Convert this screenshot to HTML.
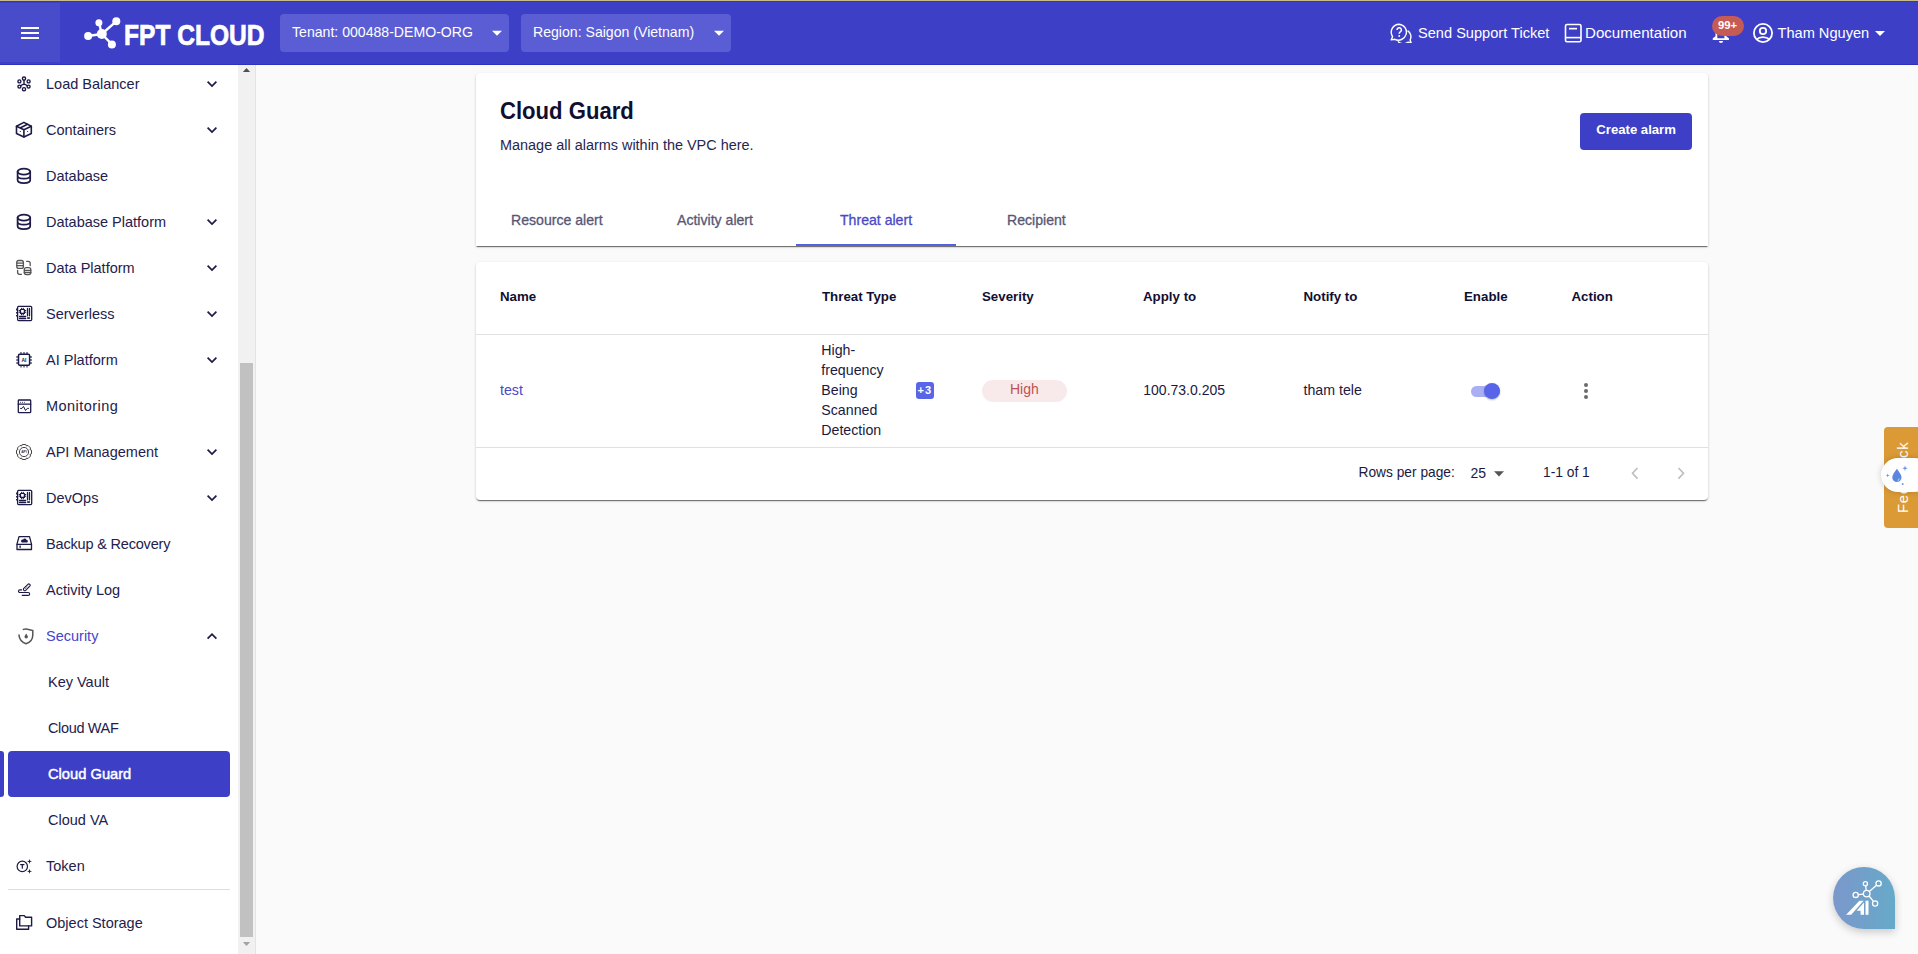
<!DOCTYPE html>
<html><head><meta charset="utf-8">
<style>
*{box-sizing:border-box;margin:0;padding:0}
html,body{width:1918px;height:954px;overflow:hidden;background:#fafafa;font-family:"Liberation Sans",sans-serif}
.abs{position:absolute}
.t{position:absolute;white-space:nowrap;line-height:1}
#topline{left:0;top:0;width:1918px;height:1px;background:#c6bc8c}
#hdr{left:0;top:1px;width:1918px;height:64px;background:#3d40c7;border-top:1px solid #3236c6;border-bottom:1px solid #2d31c0}
#hamb{left:0;top:3px;width:60px;height:59px;background:#484ccb}
.sel{position:absolute;top:14px;height:38px;background:#5a5dd3;border-radius:4px}
.wt{color:#fff}
#side{left:0;top:65px;width:238px;height:889px;background:#fff}
#track{left:238px;top:65px;width:17px;height:889px;background:#f1f1f1}
#trackb{left:255px;top:65px;width:1px;height:889px;background:#e3e3e3}
#thumb{left:240px;top:363px;width:13px;height:574px;background:#c1c1c1}
.si{position:absolute;left:46px;font-size:14.5px;color:#23214c;white-space:nowrap;line-height:1}
.ic{position:absolute;left:16px;width:16px;height:16px}
.chev{position:absolute;left:206px;width:11px;height:7px}
.card{position:absolute;background:#fff;border-radius:4px;box-shadow:0 2px 1px -1px rgba(0,0,0,.4),0 1px 1px 0 rgba(0,0,0,.2),0 1px 3px 0 rgba(0,0,0,.16)}
.th{top:290px;font-size:13.3px;font-weight:700;color:#110f33}
.td{font-size:14.2px;color:#1b1942;white-space:nowrap}
</style></head>
<body>
<div id="topline" class="abs"></div>
<div id="hdr" class="abs"></div>
<div id="hamb" class="abs"></div>
<!-- hamburger -->
<div class="abs" style="left:21px;top:27px;width:18px;height:2px;background:#fff"></div>
<div class="abs" style="left:21px;top:32px;width:18px;height:2px;background:#fff"></div>
<div class="abs" style="left:21px;top:37px;width:18px;height:2px;background:#fff"></div>


<!-- logo -->
<svg class="abs" style="left:80px;top:14px" width="44" height="38" viewBox="80 14 44 38">
 <g stroke="#fff" stroke-width="2.4" fill="none">
  <line x1="101.8" y1="34" x2="88" y2="36"/>
  <line x1="101.8" y1="34" x2="99" y2="22.8"/>
  <line x1="101.8" y1="34" x2="116.2" y2="21.3"/>
  <line x1="101.8" y1="34" x2="111.9" y2="44.4"/>
 </g>
 <g fill="#fff">
  <circle cx="101.8" cy="34" r="5"/>
  <circle cx="88.1" cy="36" r="4"/>
  <circle cx="98.9" cy="22.8" r="3.5"/>
  <circle cx="116.3" cy="21.3" r="4"/>
  <circle cx="111.9" cy="44.4" r="4"/>
 </g>
</svg>
<div class="t wt" id="logo" style="left:123.6px;top:20.8px;font-size:29.2px;font-weight:700;transform-origin:0 0;transform:scaleX(0.842);letter-spacing:0;-webkit-text-stroke:0.7px #fff">FPT CLOUD</div>

<div class="sel" style="left:280px;width:229px"></div>
<div class="t wt" style="left:292px;top:25px;font-size:14.1px">Tenant: 000488-DEMO-ORG</div>
<svg class="abs" style="left:491px;top:28px" width="12" height="9" viewBox="0 0 12 9"><path d="M1 2.7h10L6 7.7z" fill="#fff"/></svg>
<div class="sel" style="left:521px;width:210px"></div>
<div class="t wt" style="left:533px;top:25px;font-size:14.1px">Region: Saigon (Vietnam)</div>
<svg class="abs" style="left:712.5px;top:28px" width="12" height="9" viewBox="0 0 12 9"><path d="M1 2.7h10L6 7.7z" fill="#fff"/></svg>

<!-- support -->
<svg class="abs" style="left:1390px;top:23px" width="23" height="20" viewBox="0 0 23 20">
 <g fill="none" stroke="#fff" stroke-width="1.4" stroke-linejoin="round">
  <path d="M9.2 1.2a8 8 0 0 0-6.6 12.4l-1.4 3.3 3.6-.6A8 8 0 1 0 9.2 1.2z"/>
  <path d="M17.6 7.6a7.2 7.2 0 0 1 2.5 9.4l1 2.7-3.2-.5a7.3 7.3 0 0 1-10-.8"/>
 </g>
 <path d="M7 7a2.2 2.2 0 1 1 3.3 1.9c-.8.5-1.1.9-1.1 1.8" fill="none" stroke="#fff" stroke-width="1.5"/>
 <circle cx="9.2" cy="13" r="0.9" fill="#fff"/>
</svg>
<div class="t wt" style="left:1418px;top:25.5px;font-size:14.6px">Send Support Ticket</div>
<svg class="abs" style="left:1564px;top:23px" width="19" height="20" viewBox="0 0 19 20">
 <g fill="none" stroke="#fff" stroke-width="1.6">
  <rect x="1.5" y="1.5" width="15.5" height="17.3" rx="1.5"/>
  <line x1="1.5" y1="14.6" x2="17" y2="14.6"/>
 </g>
 <rect x="5" y="4.8" width="8" height="1.7" fill="#fff"/>
</svg>
<div class="t wt" style="left:1585px;top:24.8px;font-size:15.1px">Documentation</div>
<!-- bell -->
<svg class="abs" style="left:1710px;top:18px" width="22" height="26" viewBox="0 0 22 26">
 <path fill-rule="evenodd" d="M5.5 10V18.3L2.8 20.2V22H18.9V20.2L16.2 18.3V10ZM7.3 10V20.2H14.4V10Z" fill="#fff"/>
 <path d="M8.9 23h4.2a2.1 2.1 0 0 1-4.2 0z" fill="#fff"/>
</svg>
<div class="abs" style="left:1712px;top:16px;width:32px;height:20px;border-radius:10px;background:#c65a55"></div>
<div class="t wt" style="left:1718px;top:20.2px;font-size:11.3px;font-weight:700">99+</div>
<!-- user -->
<svg class="abs" style="left:1752px;top:22px" width="22" height="22" viewBox="0 0 22 22">
 <g fill="none" stroke="#fff" stroke-width="1.8">
  <circle cx="11" cy="11" r="9.1"/>
  <circle cx="11" cy="9" r="3.2"/>
  <path d="M4.6 17.4c1.6-1.5 3.8-2.3 6.4-2.3s4.8.8 6.4 2.3"/>
 </g>
</svg>
<div class="t wt" style="left:1777.5px;top:25.5px;font-size:14.6px">Tham Nguyen</div>
<svg class="abs" style="left:1874px;top:29px" width="12" height="8" viewBox="0 0 12 8"><path d="M1 2h10l-5 5z" fill="#fff"/></svg>

<div id="side" class="abs"></div>
<div id="track" class="abs"></div>
<div id="trackb" class="abs"></div>
<div id="thumb" class="abs"></div>

<svg class="abs" style="left:12px;top:72px" width="24" height="24" viewBox="0 0 24 24"><g fill="none" stroke="#1c1a47" stroke-width="1.4" stroke-linecap="round" stroke-linejoin="round"><circle cx="12" cy="6.6" r="1.6"/><circle cx="7.4" cy="9.4" r="1.5"/><circle cx="16.6" cy="9.4" r="1.5"/><circle cx="7.4" cy="14.6" r="1.5"/><circle cx="16.6" cy="14.6" r="1.5"/><circle cx="12" cy="17.2" r="1.6"/><path d="M12 8.2v4M8.8 13.8Q12 10.8 15.2 13.8"/></g></svg>
<div class="si" style="top:76.7px">Load Balancer</div>
<svg class="abs" style="left:205px;top:77px" width="14" height="14" viewBox="0 0 14 14"><path d="M2.6 4.6L7 9l4.4-4.4" fill="none" stroke="#1c1a47" stroke-width="1.7"/></svg>
<svg class="abs" style="left:12px;top:118px" width="24" height="24" viewBox="0 0 24 24"><g fill="none" stroke="#1c1a47" stroke-width="1.6" stroke-linecap="round" stroke-linejoin="round"><path d="M11.9 4.4L19.3 8.3v7.2l-7.4 3.4-7.4-3.4V8.3z"/><path d="M4.5 8.3l7.4 3.4 7.4-3.4M11.9 11.7v7.2M15.5 6.3L8 10"/></g><circle cx="8.3" cy="13.5" r=".6" fill="#1c1a47"/><circle cx="15.6" cy="13.5" r=".6" fill="#1c1a47"/></svg>
<div class="si" style="top:122.7px">Containers</div>
<svg class="abs" style="left:205px;top:123px" width="14" height="14" viewBox="0 0 14 14"><path d="M2.6 4.6L7 9l4.4-4.4" fill="none" stroke="#1c1a47" stroke-width="1.7"/></svg>
<svg class="abs" style="left:12px;top:164px" width="24" height="24" viewBox="0 0 24 24"><g fill="none" stroke="#1c1a47" stroke-linecap="round" stroke-linejoin="round" stroke-width="1.75"><ellipse cx="11.9" cy="7.6" rx="6.3" ry="3"/><path d="M5.6 7.6v8.4c0 1.7 2.8 3 6.3 3s6.3-1.3 6.3-3V7.6M5.6 11.7c0 1.7 2.8 2.9 6.3 2.9s6.3-1.2 6.3-2.9"/></g></svg>
<div class="si" style="top:168.7px">Database</div>
<svg class="abs" style="left:12px;top:210px" width="24" height="24" viewBox="0 0 24 24"><g fill="none" stroke="#1c1a47" stroke-linecap="round" stroke-linejoin="round" stroke-width="1.75"><ellipse cx="11.9" cy="7.6" rx="6.3" ry="3"/><path d="M5.6 7.6v8.4c0 1.7 2.8 3 6.3 3s6.3-1.3 6.3-3V7.6M5.6 11.7c0 1.7 2.8 2.9 6.3 2.9s6.3-1.2 6.3-2.9"/></g></svg>
<div class="si" style="top:214.7px">Database Platform</div>
<svg class="abs" style="left:205px;top:215px" width="14" height="14" viewBox="0 0 14 14"><path d="M2.6 4.6L7 9l4.4-4.4" fill="none" stroke="#1c1a47" stroke-width="1.7"/></svg>
<svg class="abs" style="left:12px;top:256px" width="24" height="24" viewBox="0 0 24 24"><g fill="none" stroke="#555" stroke-width="1.3" stroke-linecap="round"><rect x="4.8" y="4.5" width="6.6" height="7.9" rx="2"/><path d="M4.8 7.2h6.6M4.8 9.7h6.6"/><rect x="12.3" y="11.6" width="6.5" height="7" rx="2"/><path d="M12.3 14.3h6.5M12.3 16.5h6.5"/><path d="M14.6 5.3h1.6a2 2 0 0 1 2 2v2.2M5.6 14.3v2a2 2 0 0 0 2 2h1.9"/></g></svg>
<div class="si" style="top:260.7px">Data Platform</div>
<svg class="abs" style="left:205px;top:261px" width="14" height="14" viewBox="0 0 14 14"><path d="M2.6 4.6L7 9l4.4-4.4" fill="none" stroke="#1c1a47" stroke-width="1.7"/></svg>
<svg class="abs" style="left:12px;top:302px" width="24" height="24" viewBox="0 0 24 24"><g fill="none" stroke="#1c1a47" stroke-linecap="round" stroke-linejoin="round" stroke-width="1.3"><rect x="5.6" y="4.3" width="14.1" height="14.3" rx="1"/><path d="M15.5 6.4v7.4M17.5 6.4v7.4M7.5 14.5h6.2M7.5 16.5h6.2"/><rect x="8.5" y="7.5" width="3.9" height="3.9" stroke-width="1.2"/><path d="M9.6 6.2v1.3M11.3 6.2v1.3M9.6 11.4v1.3M11.3 11.4v1.3M7.2 8.6h1.3M7.2 10.3h1.3M12.4 8.6h1.3M12.4 10.3h1.3" stroke-width="1.1"/></g><rect x="15.2" y="15.2" width="2.7" height="1.7" fill="#1c1a47"/><path d="M4.1 6.5h1.5v2H4.1zM4.1 10h1.5v1.6H4.1zM4.1 13h1.5v1.6H4.1z" fill="#1c1a47"/></svg>
<div class="si" style="top:306.7px">Serverless</div>
<svg class="abs" style="left:205px;top:307px" width="14" height="14" viewBox="0 0 14 14"><path d="M2.6 4.6L7 9l4.4-4.4" fill="none" stroke="#1c1a47" stroke-width="1.7"/></svg>
<svg class="abs" style="left:12px;top:348px" width="24" height="24" viewBox="0 0 24 24"><g fill="none" stroke="#1c1a47" stroke-linecap="butt" stroke-linejoin="round" stroke-width="1.5"><rect x="6.5" y="6.3" width="11.1" height="11" rx="1.2"/><path d="M9 4v2.3M12 4v2.3M15 4v2.3M9 17.3v2.3M12 17.3v2.3M15 17.3v2.3M4.2 9h2.3M4.2 12h2.3M4.2 15h2.3M17.6 9h2.3M17.6 12h2.3M17.6 15h2.3" stroke-opacity=".8" stroke-width="1.3"/></g><text x="12" y="13.9" font-size="5" font-weight="700" text-anchor="middle" fill="#1c1a47" font-family="Liberation Sans">AI</text></svg>
<div class="si" style="top:352.7px">AI Platform</div>
<svg class="abs" style="left:205px;top:353px" width="14" height="14" viewBox="0 0 14 14"><path d="M2.6 4.6L7 9l4.4-4.4" fill="none" stroke="#1c1a47" stroke-width="1.7"/></svg>
<svg class="abs" style="left:12px;top:394px" width="24" height="24" viewBox="0 0 24 24"><g fill="none" stroke="#1c1a47" stroke-linecap="round" stroke-linejoin="round" stroke-width="1.3"><rect x="6.3" y="6" width="12.4" height="12.7" rx=".8"/><path d="M6.3 10.2h12.4"/><path d="M8.5 14.4h1.5l1.5-2 2 4.1 1.8-2.1h1.2" stroke-width="1"/></g><circle cx="8.6" cy="8.3" r=".5" fill="#1c1a47"/><circle cx="10.5" cy="8.3" r=".5" fill="#1c1a47"/><circle cx="12.4" cy="8.3" r=".5" fill="#1c1a47"/></svg>
<div class="si" style="top:398.7px;letter-spacing:0.45px">Monitoring</div>
<svg class="abs" style="left:12px;top:440px" width="24" height="24" viewBox="0 0 24 24"><g fill="none" stroke="#444" stroke-width="1" stroke-linejoin="round"><path d="M9.51 5.99 L10.17 4.52 L13.83 4.52 L14.49 5.99 L15.99 5.42 L18.58 8.01 L18.01 9.51 L19.48 10.17 L19.48 13.83 L18.01 14.49 L18.58 15.99 L15.99 18.58 L14.49 18.01 L13.83 19.48 L10.17 19.48 L9.51 18.01 L8.01 18.58 L5.42 15.99 L5.99 14.49 L4.52 13.83 L4.52 10.17 L5.99 9.51 L5.42 8.01 L8.01 5.42Z"/><circle cx="12" cy="12" r="4.6"/></g><text x="12" y="13.2" font-size="3.4" font-weight="700" text-anchor="middle" fill="#333" font-family="Liberation Sans">API</text></svg>
<div class="si" style="top:444.7px">API Management</div>
<svg class="abs" style="left:205px;top:445px" width="14" height="14" viewBox="0 0 14 14"><path d="M2.6 4.6L7 9l4.4-4.4" fill="none" stroke="#1c1a47" stroke-width="1.7"/></svg>
<svg class="abs" style="left:12px;top:486px" width="24" height="24" viewBox="0 0 24 24"><g fill="none" stroke="#1c1a47" stroke-linecap="round" stroke-linejoin="round" stroke-width="1.3"><rect x="5.6" y="4.3" width="14.1" height="14.3" rx="1"/><path d="M15.5 6.4v7.4M17.5 6.4v7.4M7.5 14.5h6.2M7.5 16.5h6.2"/><rect x="8.5" y="7.5" width="3.9" height="3.9" stroke-width="1.2"/><path d="M9.6 6.2v1.3M11.3 6.2v1.3M9.6 11.4v1.3M11.3 11.4v1.3M7.2 8.6h1.3M7.2 10.3h1.3M12.4 8.6h1.3M12.4 10.3h1.3" stroke-width="1.1"/></g><rect x="15.2" y="15.2" width="2.7" height="1.7" fill="#1c1a47"/><path d="M4.1 6.5h1.5v2H4.1zM4.1 10h1.5v1.6H4.1zM4.1 13h1.5v1.6H4.1z" fill="#1c1a47"/></svg>
<div class="si" style="top:490.7px">DevOps</div>
<svg class="abs" style="left:205px;top:491px" width="14" height="14" viewBox="0 0 14 14"><path d="M2.6 4.6L7 9l4.4-4.4" fill="none" stroke="#1c1a47" stroke-width="1.7"/></svg>
<svg class="abs" style="left:12px;top:532px" width="24" height="24" viewBox="0 0 24 24"><g fill="none" stroke="#1c1a47" stroke-linecap="round" stroke-linejoin="round" stroke-width="1.3"><path d="M7 4.6h10.5l2 7.6v5.3H5v-5.3z"/><path d="M5 12.3h14.5M8.1 14v1.5"/></g><path d="M10 10.5h4.6a1.3 1.3 0 0 0 0-2.6 1.8 1.8 0 0 0-3.4-.3 1.5 1.5 0 0 0-1.2 2.9z" fill="#1c1a47"/></svg>
<div class="si" style="top:536.7px;letter-spacing:-0.18px">Backup &amp; Recovery</div>
<svg class="abs" style="left:12px;top:578px" width="24" height="24" viewBox="0 0 24 24"><g fill="none" stroke="#1c1a47" stroke-linecap="round" stroke-linejoin="round" stroke-width="1.1"><path d="M9.6 11.9H7.8a1.3 1.3 0 0 0 0 2.6h8.4a1.45 1.45 0 0 1 0 2.9h-5.9"/><rect x="-1.35" y="-4.2" width="2.7" height="8.4" rx="1.3" transform="translate(14.8 9.3) rotate(45)"/></g><g fill="#1c1a47"><circle cx="13.6" cy="10.5" r=".45"/><circle cx="14.8" cy="9.3" r=".45"/><circle cx="16" cy="8.1" r=".45"/></g></svg>
<div class="si" style="top:582.7px">Activity Log</div>
<svg class="abs" style="left:12px;top:624px" width="24" height="24" viewBox="0 0 24 24"><g fill="none" stroke="#555" stroke-width="1.5" stroke-linecap="round"><path d="M11.4 5.4c1.5-.5 2.8-.5 4.2-.1l5.2 1.3v4.3c0 4.2-2.8 7.4-6.8 8.8-3.9-1.4-6.7-4.5-7-8.6"/></g><path d="M14.2 9.6l1.6 2.7a1.7 1.7 0 1 1-3.2 0z" fill="#555"/></svg>
<div class="si" style="top:628.7px;color:#4744cc">Security</div>
<svg class="abs" style="left:205px;top:629px" width="14" height="14" viewBox="0 0 14 14"><path d="M2.6 9.6L7 5.2l4.4 4.4" fill="none" stroke="#1c1a47" stroke-width="1.7"/></svg>
<div class="si" style="left:48px;top:674.7px">Key Vault</div>
<div class="si" style="left:48px;top:720.7px;letter-spacing:-0.35px">Cloud WAF</div>
<div class="si" style="left:48px;top:812.7px">Cloud VA</div>
<div class="abs" style="left:8px;top:751px;width:222px;height:46px;border-radius:4px;background:#3d40c7"></div>
<div class="abs" style="left:0;top:751px;width:4px;height:46px;border-radius:0 3px 3px 0;background:#3d40c7"></div>
<div class="si" style="left:48px;top:766.7px;color:#fff;font-size:14.7px;-webkit-text-stroke:0.45px #fff">Cloud Guard</div>
<svg class="abs" style="left:12px;top:854px" width="24" height="24" viewBox="0 0 24 24"><g fill="none" stroke="#1c1a47" stroke-linecap="round" stroke-linejoin="round" stroke-width="1.2"><circle cx="10.3" cy="12.4" r="5.2"/><path d="M8.6 10.6h3.4M10.3 10.6v3.6"/></g><path d="M17.5 4.9l.6 1.9 1.9.6-1.9.6-.6 1.9-.6-1.9-1.9-.6 1.9-.6zM17.5 14.8l.6 1.9 1.9.6-1.9.6-.6 1.9-.6-1.9-1.9-.6 1.9-.6z" fill="#1c1a47"/></svg>
<div class="si" style="top:858.7px">Token</div>
<div class="abs" style="left:8px;top:889px;width:222px;height:1px;background:#dcdce2"></div>
<svg class="abs" style="left:12px;top:910px" width="24" height="24" viewBox="0 0 24 24"><g fill="none" stroke="#1c1a47" stroke-linecap="round" stroke-linejoin="round" stroke-width="1.4"><path d="M7.7 5.6h4.6l1.3 1.7h6v8.6H7.7z"/><path d="M7.7 9H4.7v10.2h11.9v-3.3"/></g></svg>
<div class="si" style="top:915.7px">Object Storage</div>
<svg class="abs" style="left:238px;top:65px" width="17" height="17" viewBox="0 0 17 17"><path d="M4.9 7h7.2L8.5 3z" fill="#505050"/></svg>
<svg class="abs" style="left:238px;top:937px" width="17" height="17" viewBox="0 0 17 17"><path d="M4.9 5h7.2L8.5 9z" fill="#a3a3a3"/></svg>
<div class="card" style="left:476px;top:73px;width:1232px;height:173px;border-radius:4px 4px 0 0"></div>
<div class="card" style="left:476px;top:262px;width:1232px;height:238px"></div>

<!-- card 1 content -->
<div class="t" style="left:500px;top:101px;font-size:22.1px;font-weight:700;color:#100f30;transform-origin:0 100%;transform:scaleY(1.08)">Cloud Guard</div>
<div class="t" style="left:500px;top:138.3px;font-size:14.45px;color:#28264f">Manage all alarms within the VPC here.</div>
<div class="abs" style="left:1580px;top:113px;width:112px;height:37px;border-radius:4px;background:#3d40c7"></div>
<div class="t" style="left:1596.3px;top:123.3px;font-size:13.15px;font-weight:700;color:#fff">Create alarm</div>
<div class="t" style="left:511px;top:213px;font-size:14.1px;color:#575775;-webkit-text-stroke:0.3px #575775">Resource alert</div>
<div class="t" style="left:677px;top:213px;font-size:14.1px;color:#575775;-webkit-text-stroke:0.3px #575775">Activity alert</div>
<div class="t" style="left:840px;top:213px;font-size:14.1px;color:#4b48c9;-webkit-text-stroke:0.3px #4b48c9">Threat alert</div>
<div class="t" style="left:1007px;top:213px;font-size:14.1px;color:#575775;-webkit-text-stroke:0.3px #575775">Recipient</div>
<div class="abs" style="left:796px;top:244px;width:160px;height:2px;background:#5461e0"></div>

<!-- table -->
<div class="t th" style="left:500px">Name</div>
<div class="t th" style="left:822px">Threat Type</div>
<div class="t th" style="left:982px">Severity</div>
<div class="t th" style="left:1143px">Apply to</div>
<div class="t th" style="left:1303.5px">Notify to</div>
<div class="t th" style="left:1464px">Enable</div>
<div class="t th" style="left:1571.5px">Action</div>
<div class="abs" style="left:476px;top:334px;width:1232px;height:1px;background:#e0e0e0"></div>
<div class="abs" style="left:476px;top:447px;width:1232px;height:1px;background:#e0e0e0"></div>

<div class="t td" style="left:500px;top:383.2px;color:#4b48c9">test</div>
<div class="td" style="position:absolute;left:821.3px;top:340px;line-height:20px;width:90px">High-<br>frequency<br>Being<br>Scanned<br>Detection</div>
<div class="abs" style="left:916px;top:382px;width:18px;height:17px;border-radius:3px;background:#5865e8"></div>
<div class="t" style="left:917.5px;top:385px;font-size:11px;font-weight:700;color:#fff;letter-spacing:1px">+3</div>
<div class="abs" style="left:982px;top:380px;width:85px;height:22px;border-radius:11px;background:#f8eaea"></div>
<div class="t" style="left:1010px;top:381.7px;font-size:14px;color:#c0514e">High</div>
<div class="t td" style="left:1143.3px;top:383.4px;font-size:14px">100.73.0.205</div>
<div class="t td" style="left:1303.5px;top:383.2px">tham tele</div>
<div class="abs" style="left:1471px;top:385.5px;width:29px;height:11px;border-radius:5.5px;background:#a9aff2"></div>
<div class="abs" style="left:1484px;top:383px;width:16px;height:16px;border-radius:50%;background:#5865e8;box-shadow:0 1px 2px rgba(0,0,0,.25)"></div>
<div class="abs" style="left:1583.5px;top:382.5px;width:4px;height:4px;border-radius:50%;background:#6b6b6b"></div>
<div class="abs" style="left:1583.5px;top:388.7px;width:4px;height:4px;border-radius:50%;background:#6b6b6b"></div>
<div class="abs" style="left:1583.5px;top:395px;width:4px;height:4px;border-radius:50%;background:#6b6b6b"></div>

<div class="t td" style="left:1358.5px;top:466.2px;font-size:13.75px">Rows per page:</div>
<div class="t td" style="left:1470.5px;top:466px;font-size:14px">25</div>
<svg class="abs" style="left:1492px;top:469px" width="14" height="10" viewBox="0 0 14 10"><path d="M2 2.2h10L7 7.6z" fill="#555"/></svg>
<div class="t td" style="left:1543px;top:466.2px;font-size:13.8px">1-1 of 1</div>
<svg class="abs" style="left:1626px;top:465px" width="16" height="16" viewBox="0 0 16 16"><path d="M11.5 3L6.5 8.3l5 5.3" fill="none" stroke="#bdbdbd" stroke-width="1.6"/></svg>
<svg class="abs" style="left:1674px;top:465px" width="16" height="16" viewBox="0 0 16 16"><path d="M4.5 3l5 5.3-5 5.3" fill="none" stroke="#bdbdbd" stroke-width="1.6"/></svg>


<!-- feedback tab -->
<div class="abs" style="left:1884px;top:427px;width:40px;height:101px;border-radius:4px;background:#db9a35"></div>
<div class="t" style="left:1895.5px;top:512.5px;font-size:14.9px;color:#fff;transform-origin:0 0;transform:rotate(-90deg);letter-spacing:0.75px">Feedback</div>
<div class="abs" style="left:1881px;top:458px;width:50px;height:34px;border-radius:17px;background:#fff;box-shadow:0 0 6px rgba(0,0,0,.18)"></div>
<svg class="abs" style="left:1884px;top:462px" width="28" height="28" viewBox="0 0 28 28">
 <path d="M12.9 6.8c-2 3.2-4.6 5.8-4.6 8.6a4.6 4.6 0 0 0 9.2 0c0-2.8-2.6-5.4-4.6-8.6z" fill="#5a86e0"/>
 <path d="M15 16.5a2.4 2.4 0 0 1-1.6 2.6" fill="none" stroke="#fff" stroke-width=".9" opacity=".7"/>
 <path d="M21 3.5l.7 2.1 2.1.7-2.1.7-.7 2.1-.7-2.1-2.1-.7 2.1-.7z" fill="#6a98ea"/>
 <path d="M3.7 11.3l.5 1.6 1.6.5-1.6.5-.5 1.6-.5-1.6-1.6-.5 1.6-.5z" fill="#6a98ea"/>
 <circle cx="18.7" cy="22" r="1" fill="#6a98ea"/>
</svg>
<!-- AI button -->
<div class="abs" style="left:1833px;top:867px;width:62px;height:62px;border-radius:31px 31px 0 31px;background:linear-gradient(90deg,#7b97cc,#66aac8);box-shadow:0 3px 8px rgba(0,0,0,.2)"></div>
<svg class="abs" style="left:1833px;top:867px" width="62" height="62" viewBox="1833 867 62 62">
 <g fill="none" stroke="#fff" stroke-width="1.3">
  <circle cx="1866.7" cy="893.6" r="3.3"/>
  <circle cx="1865.4" cy="883.7" r="2.1"/>
  <circle cx="1878.6" cy="883.4" r="2.6"/>
  <circle cx="1855.7" cy="894.9" r="2.6"/>
  <circle cx="1875.1" cy="903.5" r="2.6"/>
  <path d="M1866.2 890.3l-.5-4.4M1869.3 891.5l7.2-6.2M1863.4 894.2l-5.1.5M1869.1 896l4.1 5.1"/>
 </g>
 <path d="M1846.1 914.8L1859.4 900.7H1863.6L1851.2 914.8Z M1856.6 910.8L1864 902.6V914.8H1860.6V910.8Z" fill="#fff"/>
 <rect x="1865.5" y="900.7" width="3" height="14.1" fill="#fff"/>
</svg>

</body></html>
